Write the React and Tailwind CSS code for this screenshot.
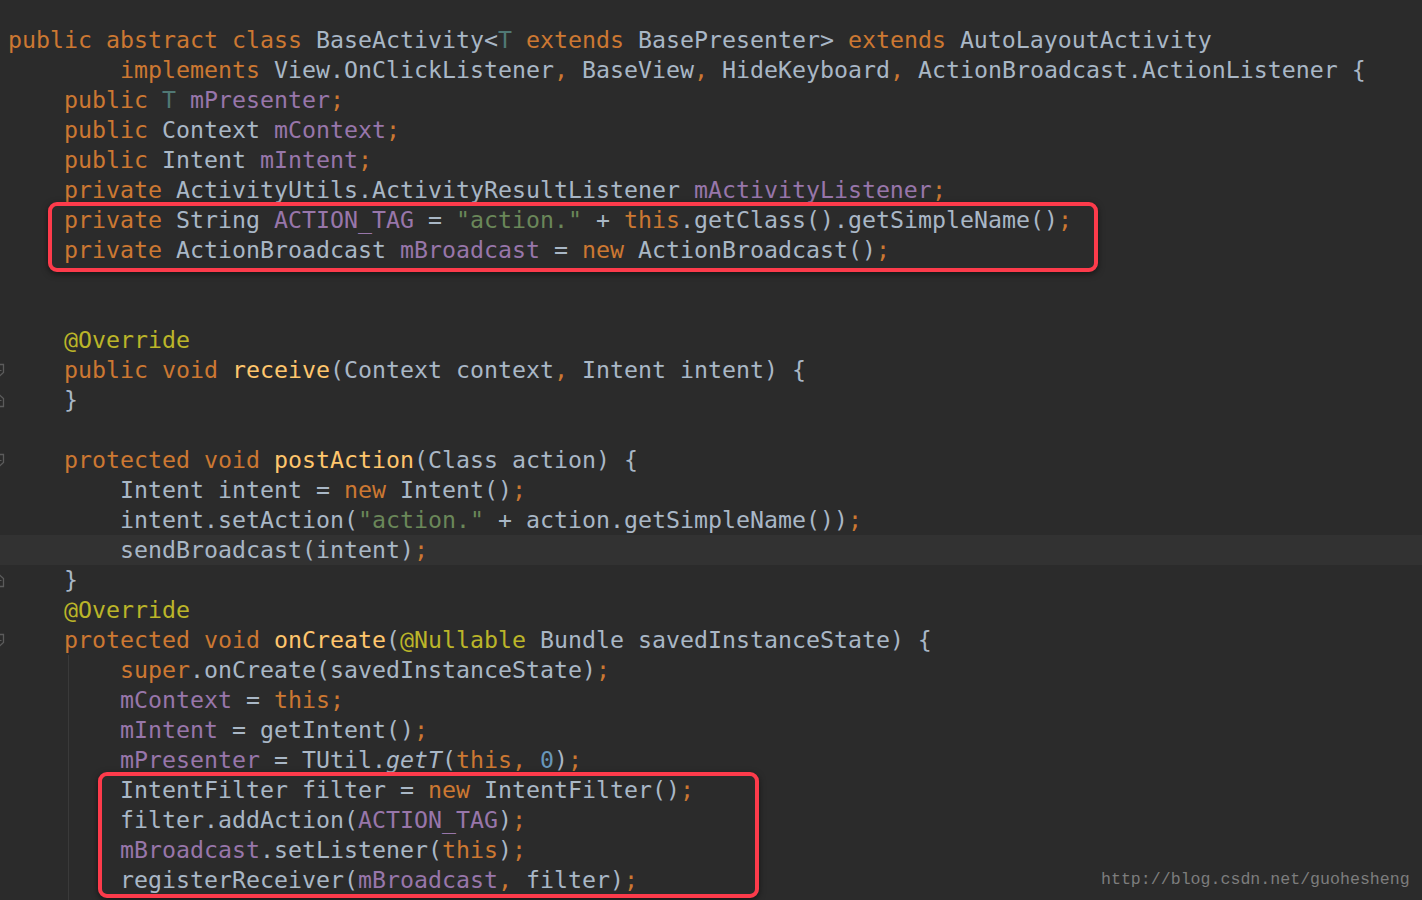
import React from 'react';

// Darcula token colours
const K = 'text-[#cc7832]'; // keyword
const T = 'text-[#a9b7c6]'; // plain
const P = 'text-[#9876aa]'; // field
const S = 'text-[#6a8759]'; // string
const A = 'text-[#bbb529]'; // annotation
const M = 'text-[#ffc66d]'; // method declaration
const N = 'text-[#6897bb]'; // number
const G = 'text-[#507874]'; // type parameter
const I = 'text-[#a9b7c6] italic';

const lines = [
  { t: [[K, 'public abstract class '], [T, 'BaseActivity<'], [G, 'T'], [K, ' extends '], [T, 'BasePresenter> '], [K, 'extends '], [T, 'AutoLayoutActivity']] },
  { t: [[T, '        '], [K, 'implements '], [T, 'View.OnClickListener'], [K, ', '], [T, 'BaseView'], [K, ', '], [T, 'HideKeyboard'], [K, ', '], [T, 'ActionBroadcast.ActionListener {']] },
  { t: [[T, '    '], [K, 'public '], [G, 'T '], [P, 'mPresenter'], [K, ';']] },
  { t: [[T, '    '], [K, 'public '], [T, 'Context '], [P, 'mContext'], [K, ';']] },
  { t: [[T, '    '], [K, 'public '], [T, 'Intent '], [P, 'mIntent'], [K, ';']] },
  { t: [[T, '    '], [K, 'private '], [T, 'ActivityUtils.ActivityResultListener '], [P, 'mActivityListener'], [K, ';']] },
  { t: [[T, '    '], [K, 'private '], [T, 'String '], [P, 'ACTION_TAG'], [T, ' = '], [S, '"action."'], [T, ' + '], [K, 'this'], [T, '.getClass().getSimpleName()'], [K, ';']] },
  { t: [[T, '    '], [K, 'private '], [T, 'ActionBroadcast '], [P, 'mBroadcast'], [T, ' = '], [K, 'new '], [T, 'ActionBroadcast()'], [K, ';']] },
  { t: [] },
  { t: [] },
  { t: [[T, '    '], [A, '@Override']] },
  { t: [[T, '    '], [K, 'public void '], [M, 'receive'], [T, '(Context context'], [K, ', '], [T, 'Intent intent) {']], fold: 'open' },
  { t: [[T, '    }']], fold: 'close' },
  { t: [] },
  { t: [[T, '    '], [K, 'protected void '], [M, 'postAction'], [T, '(Class action) {']], fold: 'open' },
  { t: [[T, '        Intent intent = '], [K, 'new '], [T, 'Intent()'], [K, ';']] },
  { t: [[T, '        intent.setAction('], [S, '"action."'], [T, ' + action.getSimpleName())'], [K, ';']] },
  { t: [[T, '        sendBroadcast(intent)'], [K, ';']], current: true },
  { t: [[T, '    }']], fold: 'close' },
  { t: [[T, '    '], [A, '@Override']] },
  { t: [[T, '    '], [K, 'protected void '], [M, 'onCreate'], [T, '('], [A, '@Nullable '], [T, 'Bundle savedInstanceState) {']], fold: 'open' },
  { t: [[T, '        '], [K, 'super'], [T, '.onCreate(savedInstanceState)'], [K, ';']], guide: true },
  { t: [[T, '        '], [P, 'mContext'], [T, ' = '], [K, 'this;']], guide: true },
  { t: [[T, '        '], [P, 'mIntent'], [T, ' = getIntent()'], [K, ';']], guide: true },
  { t: [[T, '        '], [P, 'mPresenter'], [T, ' = TUtil.'], [I, 'getT'], [T, '('], [K, 'this, '], [N, '0'], [T, ')'], [K, ';']], guide: true },
  { t: [[T, '        IntentFilter filter = '], [K, 'new '], [T, 'IntentFilter()'], [K, ';']], guide: true },
  { t: [[T, '        filter.addAction('], [P, 'ACTION_TAG'], [T, ')'], [K, ';']], guide: true },
  { t: [[T, '        '], [P, 'mBroadcast'], [T, '.setListener('], [K, 'this'], [T, ')'], [K, ';']], guide: true },
  { t: [[T, '        registerReceiver('], [P, 'mBroadcast'], [K, ', '], [T, 'filter)'], [K, ';']], guide: true },
  { t: [], guide: true },
];

const FoldMark = ({ type }) => (
  <svg className="absolute left-[-7px] top-[8px]" width="12" height="15" viewBox="0 0 12 15">
    {type === 'open' ? (
      <path d="M1.5 1.5 H10.5 V9.5 L6 13.5 L1.5 9.5 Z" fill="none" stroke="#5b5b5b" strokeWidth="1.3" />
    ) : (
      <path d="M1.5 13.5 H10.5 V5.5 L6 1.5 L1.5 5.5 Z" fill="none" stroke="#5b5b5b" strokeWidth="1.3" />
    )}
    <path d="M3.5 7.5 H8.5" stroke="#5b5b5b" strokeWidth="1.2" />
  </svg>
);

export default function App() {
  return (
    <div className="relative w-full h-[900px] overflow-hidden bg-[#2b2b2b] pt-[25px] font-['DejaVu_Sans_Mono',monospace] text-[23.26px]">
      {lines.map((line, i) => (
        <div
          key={i}
          className={`relative h-[30px] leading-[30px] pl-[8px] whitespace-pre ${line.current ? 'bg-[#323232]' : ''}`}
        >
          {line.fold && <FoldMark type={line.fold} />}
          {line.guide && <span className="absolute left-[68px] top-0 h-[30px] w-px bg-[#3a3a3a]" />}
          {line.t.map(([cls, txt], j) => (
            <span key={j} className={cls}>{txt}</span>
          ))}
        </div>
      ))}

      {/* highlight boxes */}
      <div className="absolute left-[48px] top-[202px] w-[1050px] h-[70px] border-4 border-[#fd3b4b] rounded-[9px] shadow-[0_2px_6px_rgba(0,0,0,0.5)]" />
      <div className="absolute left-[98px] top-[772px] w-[661px] h-[126px] border-4 border-[#fd3b4b] rounded-[9px] shadow-[0_2px_6px_rgba(0,0,0,0.5)]" />

      {/* watermark */}
      <div className="absolute left-[1101px] top-[868px] text-[16.6px] leading-[24px] text-[#7d7d7d] font-['Liberation_Mono',monospace] whitespace-pre">
        http://blog.csdn.net/guohesheng
      </div>
    </div>
  );
}
